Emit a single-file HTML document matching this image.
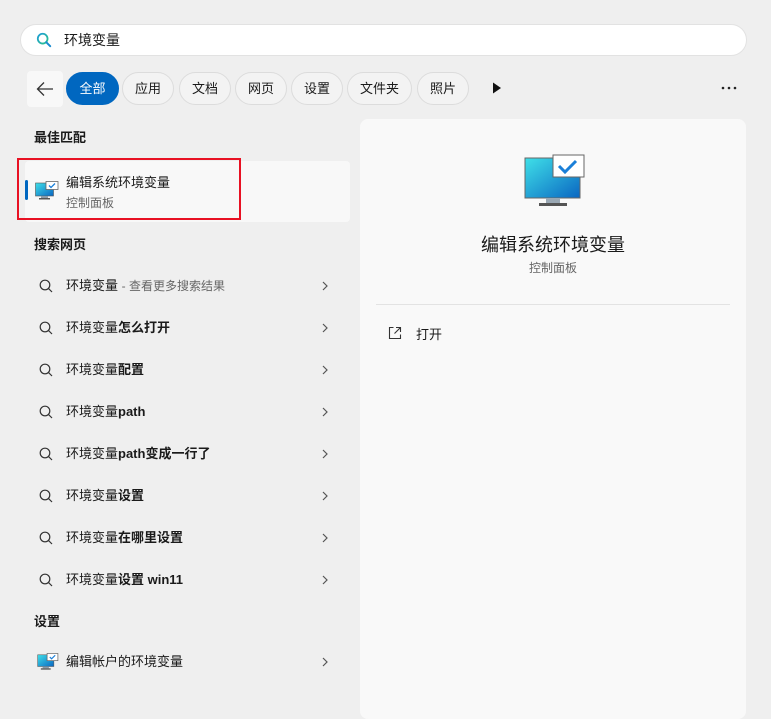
<!DOCTYPE html>
<html><head><meta charset="utf-8"><style>
*{margin:0;padding:0;box-sizing:border-box}
body{width:771px;height:713px;overflow:hidden;background:#efefef;font-family:"Liberation Sans","Noto Sans CJK SC",sans-serif;color:#1a1a1a;position:relative;font-size:13px}
.abs{position:absolute}
.search{left:20px;top:24px;width:727px;height:32px;background:#fff;border:1px solid #e2e2e2;border-radius:16px}
.pill{position:absolute;top:72px;height:33px;border:1px solid #dcdcdc;border-radius:17px;background:#f3f3f3;font-size:13px;line-height:31px;text-align:center}
.hdr{position:absolute;left:34px;font-weight:bold;font-size:13px}
.row{position:absolute;left:25px;width:325px;height:40px;line-height:40px}
.row .q{position:absolute;left:14px;top:13px}
.row .t{position:absolute;left:41px;font-size:13px}
.row .c{position:absolute;left:296px;top:14px}
b{font-weight:bold}
</style></head><body>
<div class="abs search"></div>
<svg class="abs" style="left:36px;top:32px" width="16" height="16" viewBox="0 0 18 18"><defs><linearGradient id="g" x1="0" y1="0" x2="1" y2="1"><stop offset="0" stop-color="#1d9bd6"/><stop offset="1" stop-color="#2bc48a"/></linearGradient></defs><circle cx="7.5" cy="7.5" r="5.5" fill="none" stroke="url(#g)" stroke-width="2"/><path d="M11.5 11.5L16 16" stroke="#1a8bd0" stroke-width="2.2" stroke-linecap="round"/></svg>
<div class="abs" style="left:64px;top:30px;font-size:14px">环境变量</div>
<div class="abs" style="left:27px;top:71px;width:36px;height:36px;background:#f8f8f8;border-radius:4px"></div>
<svg class="abs" style="left:36px;top:81px" width="18" height="16" viewBox="0 0 18 16"><path d="M17 8H2M8 1.5L1.5 8 8 14.5" fill="none" stroke="#333" stroke-width="1.3"/></svg>
<div class="pill" style="left:66px;width:53px;background:#0067c0;border-color:#0067c0;color:#fff">全部</div>
<div class="pill" style="left:122px;width:52px">应用</div>
<div class="pill" style="left:179px;width:52px">文档</div>
<div class="pill" style="left:235px;width:52px">网页</div>
<div class="pill" style="left:291px;width:52px">设置</div>
<div class="pill" style="left:347px;width:65px">文件夹</div>
<div class="pill" style="left:417px;width:52px">照片</div>
<svg class="abs" style="left:492px;top:82px" width="10" height="12"><path d="M1 0.5L9 6 1 11.5Z" fill="#111"/></svg>
<svg class="abs" style="left:721px;top:86px" width="16" height="4"><circle cx="2" cy="2" r="1.3" fill="#222"/><circle cx="8" cy="2" r="1.3" fill="#222"/><circle cx="14" cy="2" r="1.3" fill="#222"/></svg>

<div class="hdr" style="top:127px">最佳匹配</div>
<div class="abs" style="left:25px;top:161px;width:325px;height:61px;background:#f8f8f8;border-radius:4px"></div>
<div class="abs" style="left:25px;top:180px;width:3px;height:20px;background:#0067c0;border-radius:2px"></div>
<div class="abs" style="left:17px;top:158px;width:224px;height:62px;border:2px solid #e81123"></div>
<svg class="abs" style="left:35px;top:181px" width="24" height="20" viewBox="0 0 24 20"><defs><linearGradient id="m" x1="0" y1="0" x2="1" y2="1"><stop offset="0" stop-color="#3fe0e8"/><stop offset="1" stop-color="#0a66c2"/></linearGradient></defs><rect x="0.5" y="2" width="18" height="13" fill="url(#m)" stroke="#555" stroke-width=".6"/><rect x="6" y="15" width="7" height="2" fill="#8a9aa8"/><rect x="4" y="17" width="11" height="1.5" fill="#555"/><rect x="11" y="0.5" width="12" height="8" fill="#fff" stroke="#666" stroke-width=".8"/><path d="M14 4.5l2 2 4-4" fill="none" stroke="#1a7fd8" stroke-width="1.3"/></svg>
<div class="abs" style="left:66px;top:172px;font-size:13px">编辑系统环境变量</div>
<div class="abs" style="left:66px;top:194px;font-size:12px;color:#666">控制面板</div>

<div class="hdr" style="top:234px">搜索网页</div>
<div class="row" style="top:266px"><svg class="q" width="14" height="14"><circle cx="6" cy="6" r="4.8" fill="none" stroke="#333" stroke-width="1.2"/><path d="M9.5 9.5L13 13" stroke="#333" stroke-width="1.2"/></svg><span class="t">环境变量 <span style="color:#666;font-size:12px">- 查看更多搜索结果</span></span><svg class="c" width="8" height="12"><path d="M2 2l4 4-4 4" fill="none" stroke="#555" stroke-width="1.2"/></svg></div>
<div class="row" style="top:308px"><svg class="q" width="14" height="14"><circle cx="6" cy="6" r="4.8" fill="none" stroke="#333" stroke-width="1.2"/><path d="M9.5 9.5L13 13" stroke="#333" stroke-width="1.2"/></svg><span class="t">环境变量<b>怎么打开</b></span><svg class="c" width="8" height="12"><path d="M2 2l4 4-4 4" fill="none" stroke="#555" stroke-width="1.2"/></svg></div>
<div class="row" style="top:350px"><svg class="q" width="14" height="14"><circle cx="6" cy="6" r="4.8" fill="none" stroke="#333" stroke-width="1.2"/><path d="M9.5 9.5L13 13" stroke="#333" stroke-width="1.2"/></svg><span class="t">环境变量<b>配置</b></span><svg class="c" width="8" height="12"><path d="M2 2l4 4-4 4" fill="none" stroke="#555" stroke-width="1.2"/></svg></div>
<div class="row" style="top:392px"><svg class="q" width="14" height="14"><circle cx="6" cy="6" r="4.8" fill="none" stroke="#333" stroke-width="1.2"/><path d="M9.5 9.5L13 13" stroke="#333" stroke-width="1.2"/></svg><span class="t">环境变量<b>path</b></span><svg class="c" width="8" height="12"><path d="M2 2l4 4-4 4" fill="none" stroke="#555" stroke-width="1.2"/></svg></div>
<div class="row" style="top:434px"><svg class="q" width="14" height="14"><circle cx="6" cy="6" r="4.8" fill="none" stroke="#333" stroke-width="1.2"/><path d="M9.5 9.5L13 13" stroke="#333" stroke-width="1.2"/></svg><span class="t">环境变量<b>path变成一行了</b></span><svg class="c" width="8" height="12"><path d="M2 2l4 4-4 4" fill="none" stroke="#555" stroke-width="1.2"/></svg></div>
<div class="row" style="top:476px"><svg class="q" width="14" height="14"><circle cx="6" cy="6" r="4.8" fill="none" stroke="#333" stroke-width="1.2"/><path d="M9.5 9.5L13 13" stroke="#333" stroke-width="1.2"/></svg><span class="t">环境变量<b>设置</b></span><svg class="c" width="8" height="12"><path d="M2 2l4 4-4 4" fill="none" stroke="#555" stroke-width="1.2"/></svg></div>
<div class="row" style="top:518px"><svg class="q" width="14" height="14"><circle cx="6" cy="6" r="4.8" fill="none" stroke="#333" stroke-width="1.2"/><path d="M9.5 9.5L13 13" stroke="#333" stroke-width="1.2"/></svg><span class="t">环境变量<b>在哪里设置</b></span><svg class="c" width="8" height="12"><path d="M2 2l4 4-4 4" fill="none" stroke="#555" stroke-width="1.2"/></svg></div>
<div class="row" style="top:560px"><svg class="q" width="14" height="14"><circle cx="6" cy="6" r="4.8" fill="none" stroke="#333" stroke-width="1.2"/><path d="M9.5 9.5L13 13" stroke="#333" stroke-width="1.2"/></svg><span class="t">环境变量<b>设置 win11</b></span><svg class="c" width="8" height="12"><path d="M2 2l4 4-4 4" fill="none" stroke="#555" stroke-width="1.2"/></svg></div>

<div class="hdr" style="top:611px">设置</div>
<div class="row" style="top:642px"><svg style="position:absolute;left:12px;top:11px" width="22" height="18" viewBox="0 0 24 20"><rect x="0.5" y="2" width="18" height="13" fill="url(#m)" stroke="#555" stroke-width=".6"/><rect x="6" y="15" width="7" height="2" fill="#8a9aa8"/><rect x="4" y="17" width="11" height="1.5" fill="#555"/><rect x="11" y="0.5" width="12" height="8" fill="#fff" stroke="#666" stroke-width=".8"/><path d="M14 4.5l2 2 4-4" fill="none" stroke="#1a7fd8" stroke-width="1.3"/></svg><span class="t">编辑帐户的环境变量</span><svg class="c" width="8" height="12"><path d="M2 2l4 4-4 4" fill="none" stroke="#555" stroke-width="1.2"/></svg></div>

<div class="abs" style="left:360px;top:119px;width:386px;height:600px;background:#f9f9f9;border-radius:8px"></div>
<svg class="abs" style="left:524px;top:154px" width="62" height="55" viewBox="0 0 62 55"><rect x="1" y="4" width="55" height="40" fill="url(#m)" stroke="#666" stroke-width="1"/><rect x="22" y="44" width="14" height="6" fill="#9aa8b4"/><rect x="15" y="49" width="28" height="3" fill="#555"/><rect x="29" y="1" width="31" height="22" fill="#fff" stroke="#666" stroke-width="1"/><path d="M35 12l6 6 11-11" fill="none" stroke="#1a7fd8" stroke-width="3"/></svg>
<div class="abs" style="left:360px;top:231px;width:386px;text-align:center;font-size:18px">编辑系统环境变量</div>
<div class="abs" style="left:360px;top:259px;width:386px;text-align:center;font-size:12px;color:#666">控制面板</div>
<div class="abs" style="left:376px;top:304px;width:354px;height:1px;background:#e3e3e3"></div>
<svg class="abs" style="left:388px;top:326px" width="14" height="14"><path d="M5.5 1.5H1.5v11h11V8.5M8 1.5h4.5V6M12.5 1.5L6.5 7.5" fill="none" stroke="#333" stroke-width="1.1"/></svg>
<div class="abs" style="left:416px;top:324px;font-size:13px">打开</div>
</body></html>
